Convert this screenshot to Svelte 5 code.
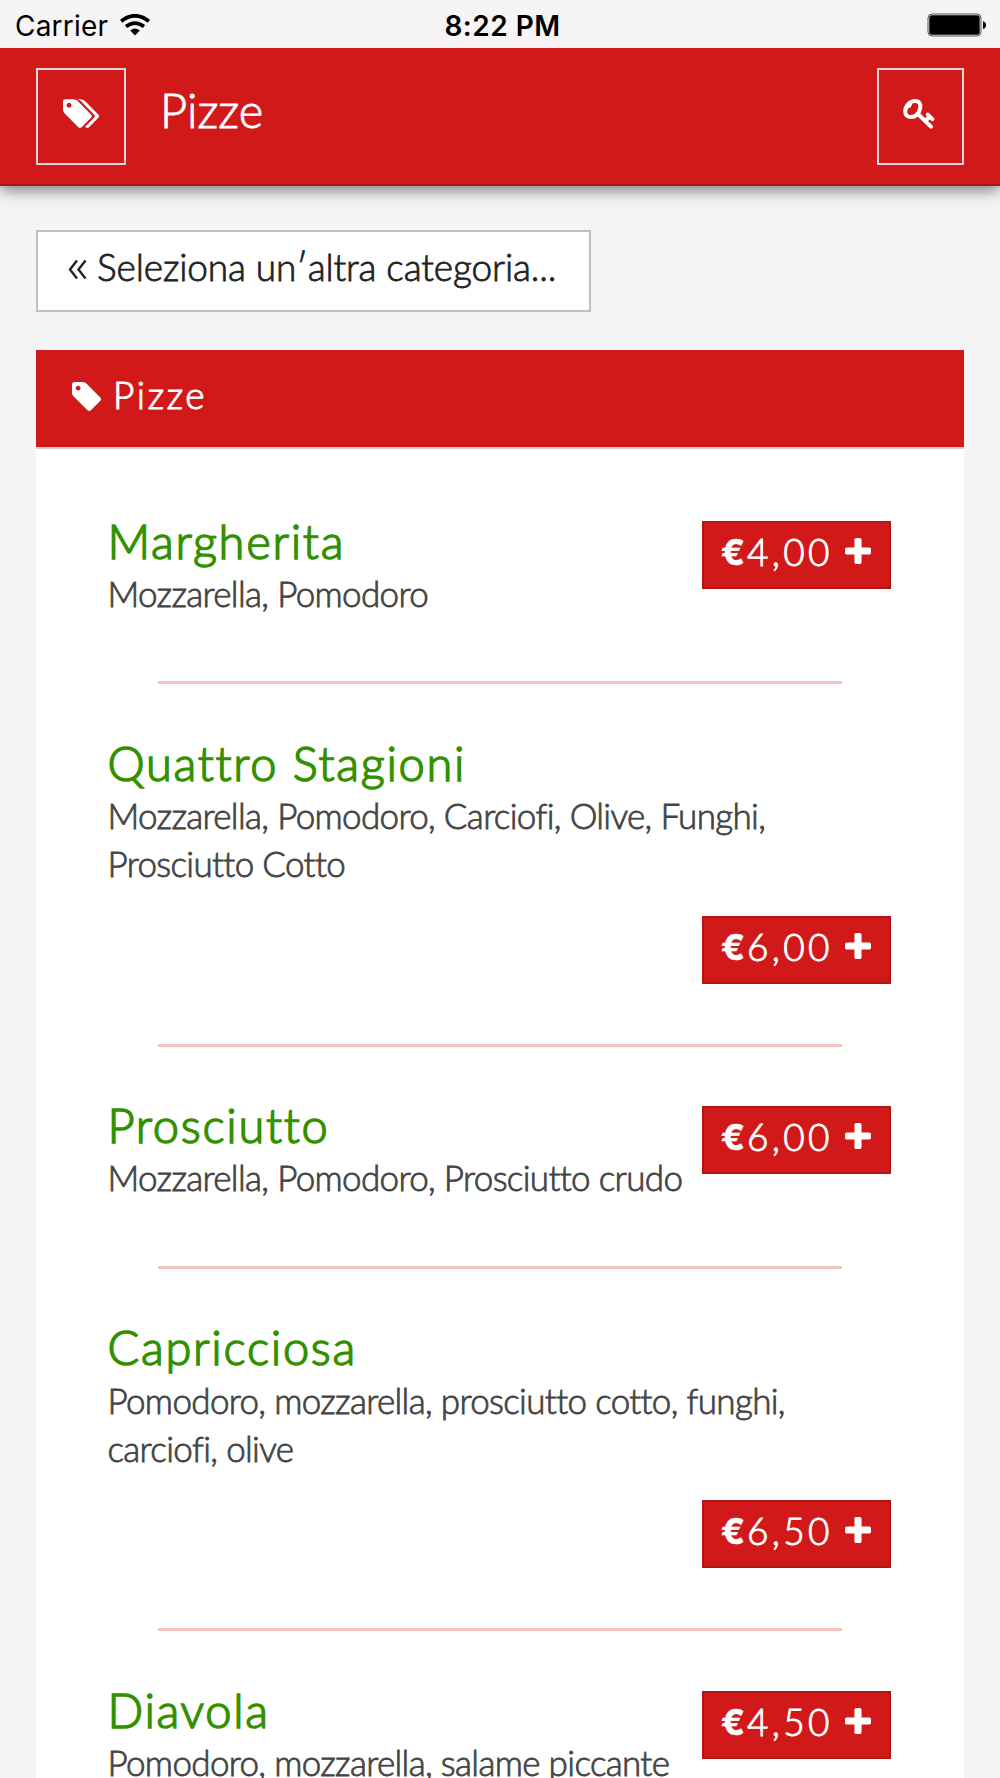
<script>
  const items = [
    { name: 'Margherita', toppings: 'Mozzarella, Pomodoro', price: '4,00' },
    { name: 'Quattro Stagioni', toppings: 'Mozzarella, Pomodoro, Carciofi, Olive, Funghi, Prosciutto Cotto', price: '6,00', stacked: true },
    { name: 'Prosciutto', toppings: 'Mozzarella, Pomodoro, Prosciutto crudo', price: '6,00' },
    { name: 'Capricciosa', toppings: 'Pomodoro, mozzarella, prosciutto cotto, funghi, carciofi, olive', price: '6,50', stacked: true },
    { name: 'Diavola', toppings: 'Pomodoro, mozzarella, salame piccante', price: '4,50' }
  ];
</script>

<div class="screen">
  <div class="status">
    <div class="carrier">
      <span>Carrier</span>
      <svg class="wifi" viewBox="0 0 30 22" aria-hidden="true">
        <path d="M1.2 7.2Q15-3.6 28.8 7.2" />
        <path d="M6 12.6Q15 5.6 24 12.6" />
        <path class="solid" d="M10.2 16.6Q15 12.6 19.8 16.6L15 21.6Z" />
      </svg>
    </div>
    <span class="time">8:22 PM</span>
    <svg class="battery" viewBox="0 0 60 24" aria-hidden="true">
      <rect class="shell" x="1" y="1" width="53" height="22" rx="4" />
      <rect x="2.3" y="2.3" width="50.4" height="19.4" rx="2.5" />
      <path d="M56 8q3 1 3 4t-3 4z" />
    </svg>
  </div>

  <header>
    <button class="square left" aria-label="Categorie">
      <svg class="tags" viewBox="0 128 1899 1515"><path d="M448 448q0-53-37.5-90.5t-90.5-37.5-90.5 37.5-37.5 90.5 37.5 90.5 90.5 37.5 90.5-37.5 37.5-90.5zm1067 576q0 53-37 90l-491 492q-39 37-91 37-53 0-90-37l-715-716q-38-37-64.5-101t-26.5-117v-416q0-52 38-90t90-38h416q53 0 117 26.5t102 64.5l715 714q37 39 37 91zm384 0q0 53-37 90l-491 492q-39 37-91 37-36 0-59-14t-53-45l470-470q37-37 37-90 0-52-37-91l-715-714q-38-38-102-64.5t-117-26.5h224q53 0 117 26.5t102 64.5l715 714q37 39 37 91z" /></svg>
    </button>
    <h1>Pizze</h1>
    <button class="square right" aria-label="Accedi">
      <svg class="key" viewBox="0 0 32 30"><path d="M15 15L28 27.6M22.3 22L26.8 17.4M24.8 15.6L29.4 20.2" /><path d="M2.2 12.4C2.2 6.6 7 2.1 12 2.1C16.4 2.1 18 5 17.2 9C16 14.6 12.6 18 8 18C4.4 18 2.2 15.8 2.2 12.4Z" /><path class="notch" d="M4 5L9.6 4L8.4 6.8Q8.2 9 5.6 9L4 11Z" /></svg>
    </button>
  </header>

  <main>
    <button class="back">
      <svg viewBox="0 0 20 21" aria-hidden="true"><path d="M9 1.5L2 10.5L9 19.5M17.5 1.5L10.5 10.5L17.5 19.5" /></svg>
      <span>Seleziona un′altra categoria...</span>
    </button>

    <section class="panel">
      <h2>
        <svg viewBox="128 128 1515 1515" aria-hidden="true"><path d="M576 448q0-53-37.5-90.5t-90.5-37.5-90.5 37.5-37.5 90.5 37.5 90.5 90.5 37.5 90.5-37.5 37.5-90.5zm1067 576q0 53-37 90l-491 492q-39 37-91 37-53 0-90-37l-715-716q-38-37-64.5-101t-26.5-117v-416q0-52 38-90t90-38h416q53 0 117 26.5t102 64.5l715 714q37 39 37 91z" /></svg>
        <span>Pizze</span>
      </h2>
      {#each items as item}
        <article class:stacked={item.stacked}>
          <div class="info">
            <h3>{item.name}</h3>
            <p>{item.toppings}</p>
          </div>
          <button class="price">
            <b>€</b><span>{item.price}</span>
            <svg viewBox="192 128 1408 1408" aria-hidden="true"><path d="M1600 736v192q0 40-28 68t-68 28h-416v416q0 40-28 68t-68 28h-192q-40 0-68-28t-28-68v-416h-416q-40 0-68-28t-28-68v-192q0-40 28-68t68-28h416v-416q0-40 28-68t68-28h192q40 0 68 28t28 68v416h416q40 0 68 28t28 68z" /></svg>
          </button>
        </article>
      {/each}
    </section>
  </main>
</div>

<style>
  :global(body) { background: #f4f4f4; }
  .screen {
    width: 1000px;
    height: 1778px;
    overflow: hidden;
    background: #f4f4f4;
    font-family: Lato, "Open Sans", sans-serif;
    font-weight: 300;
  }
  button {
    box-sizing: border-box;
    margin: 0;
    padding: 0;
    font: inherit;
    border-radius: 0;
  }
  h1, h2, h3, p { margin: 0; font-weight: 300; }
  svg { display: block; flex: none; }

  .status {
    position: relative;
    z-index: 1;
    box-sizing: border-box;
    display: grid;
    grid-template-columns: 1fr auto 1fr;
    align-items: center;
    height: 48px;
    padding: 0 13px 0 15px;
    background: #f6f4f4;
    color: #000;
    font-family: Inter, sans-serif;
    font-size: 28px;
    line-height: 48px;
  }
  .carrier { display: flex; align-items: center; gap: 12px; font-weight: 400; padding-top: 2px; letter-spacing: 0.2px; }
  .time { font-weight: 600; padding: 2px 0 0 3px; letter-spacing: 0.5px; }
  .wifi { width: 30px; height: 22px; margin-top: -3px; fill: none; stroke: #000; stroke-width: 3.8; }
  .wifi .solid { fill: #000; stroke: none; }
  .battery { width: 60px; height: 24px; justify-self: end; }
  .shell { fill: none; stroke: #555; stroke-width: 1; }

  header {
    position: relative;
    box-sizing: border-box;
    display: flex;
    align-items: flex-start;
    height: 138px;
    padding: 19.5px 36px 0;
    background: #d01918;
    border-bottom: 2px solid #ae1412;
    box-shadow: 0 4px 14px rgba(0, 0, 0, 0.5);
    color: #fff;
  }
  .square {
    display: flex;
    justify-content: center;
    height: 97px;
    padding-top: 29px;
    border: 2px solid #dcd6d6;
    background: transparent;
  }
  .left { width: 90px; }
  .right { width: 87px; margin-left: auto; }
  .tags { width: 36px; height: 29px; fill: #fff; }
  .key { width: 32px; height: 30px; margin-right: 3px; fill: none; stroke: #fff; stroke-width: 4; stroke-linecap: round; }
  .key .notch { fill: #fff; stroke: none; }
  h1 {
    margin-left: 34px;
    font-size: 47px;
    line-height: 56px;
    padding-top: 14.5px;
    -webkit-text-stroke: 0.9px #fff;
  }

  main { padding: 44px 36px 0; }
  .back {
    display: flex;
    align-items: flex-start;
    gap: 9px;
    width: 555px;
    height: 82px;
    padding: 13px 0 0 30px;
    border: 2px solid #c1c1c1;
    background: #fff;
    color: #222;
    font-size: 37px;
    line-height: 44px;
    letter-spacing: -0.12px;
    white-space: nowrap;
    -webkit-text-stroke: 0.8px #222;
  }
  .back svg { width: 20px; height: 21px; margin-top: 14px; fill: none; stroke: #222; stroke-width: 2.4; }

  .panel { margin-top: 38px; background: #fff; height: 1500px; }
  h2 {
    box-sizing: border-box;
    display: flex;
    align-items: flex-start;
    gap: 12px;
    height: 99px;
    padding: 23px 0 0 36px;
    background: #d01918;
    border-bottom: 2px solid #ccc;
    color: #fff;
    font-size: 37px;
    line-height: 44px;
    letter-spacing: 2.6px;
    -webkit-text-stroke: 1px #fff;
  }
  h2 svg { width: 29px; height: 29px; margin-top: 9px; fill: #fff; stroke: none; }

  article {
    position: relative;
    display: flex;
    justify-content: space-between;
    align-items: flex-start;
    margin: 0 73px 0 71.5px;
    padding: 53.6px 0 65.1px;
  }
  .panel article:first-of-type { padding-top: 64.5px; }
  article:not(:last-child)::after {
    content: "";
    position: absolute;
    bottom: -2px;
    left: 50.5px;
    width: 684px;
    height: 3px;
    background: #f5c4c2;
  }
  .stacked { flex-direction: column; padding-bottom: 61px; }
  .info { flex: none; max-width: 700px; }
  h3 {
    color: #339100;
    font-size: 47px;
    line-height: 55.3px;
    letter-spacing: 1.7px;
    -webkit-text-stroke: 1.5px #339100;
  }
  p {
    color: #444;
    font-size: 35px;
    line-height: 48.3px;
    letter-spacing: -0.66px;
    -webkit-text-stroke: 0.8px #444;
  }
  .price {
    display: flex;
    align-items: flex-start;
    flex: none;
    width: 189px;
    height: 68px;
    margin-top: 7.8px;
    padding: 7px 0 0 17px;
    border: 2px solid #b31513;
    background: #d01918;
    color: #fff;
    font-size: 37px;
    line-height: 44px;
    -webkit-text-stroke: 0.9px #fff;
  }
  .stacked .price { align-self: flex-end; margin-top: 27.9px; }
  .price b { width: 21px; flex: none; font-family: Inter, sans-serif; font-size: 35px; font-weight: 700; text-align: left; -webkit-text-stroke: 0.6px #fff; }
  .price span { width: 103px; padding-left: 5px; box-sizing: border-box; text-align: left; letter-spacing: 3.3px; }
  .price svg { width: 26px; height: 26px; margin-top: 8px; fill: #fff; stroke: none; }
</style>
